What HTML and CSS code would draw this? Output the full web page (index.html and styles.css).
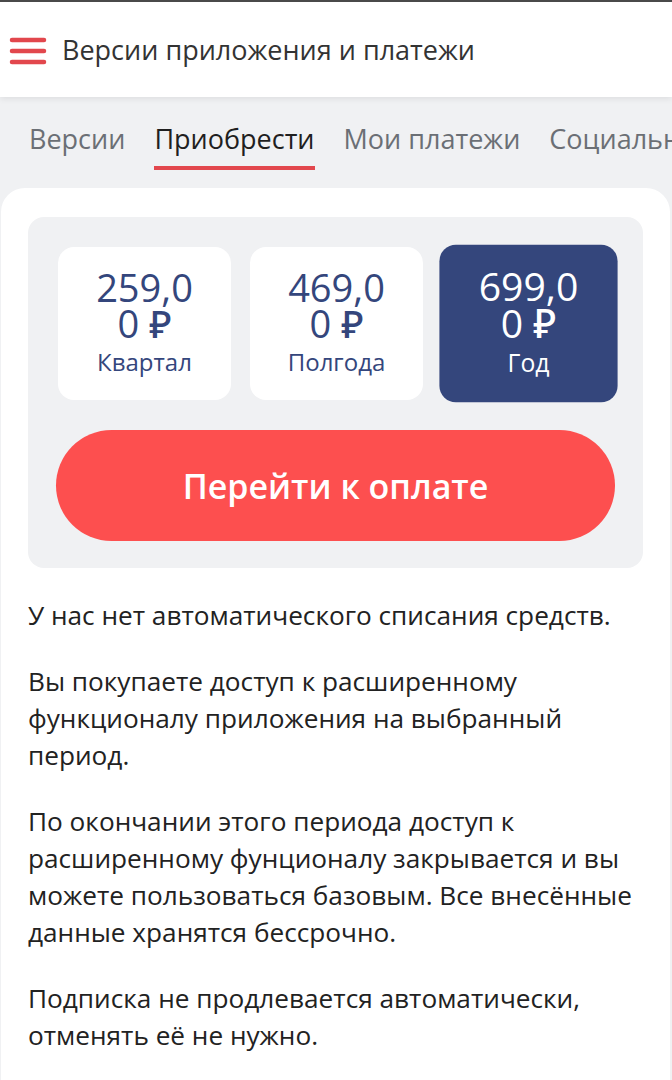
FILE: index.html
```html
<!DOCTYPE html>
<html lang="ru">
<head>
<meta charset="utf-8">
<link rel="stylesheet" href="styles.css">
</head>
<body>
<header class="topbar">
  <button class="menu" aria-label="Меню">
    <svg width="38" height="28" viewBox="0 0 38 28"><g stroke="#e2474d" stroke-width="4.5" stroke-linecap="round"><line x1="3" y1="3" x2="35" y2="3"/><line x1="3" y1="14" x2="35" y2="14"/><line x1="3" y1="25" x2="35" y2="25"/></g></svg>
  </button>
  <h1 class="title">Версии приложения и платежи</h1>
</header>
<nav class="tabs">
  <span class="tab">Версии</span>
  <span class="tab active">Приобрести</span>
  <span class="tab">Мои платежи</span>
  <span class="tab">Социальные</span>
</nav>
<main class="card">
  <section class="panel">
    <div class="plans">
      <div class="plan"><div class="price">259,00 ₽</div><div class="period">Квартал</div></div>
      <div class="plan"><div class="price">469,00 ₽</div><div class="period">Полгода</div></div>
      <div class="plan selected"><div class="price">699,00 ₽</div><div class="period">Год</div></div>
    </div>
    <button class="pay">Перейти к оплате</button>
  </section>
  <p>У нас нет автоматического списания средств.</p>
  <p>Вы покупаете доступ к расширенному функционалу приложения на выбранный период.</p>
  <p>По окончании этого периода доступ к расширенному фунционалу закрывается и вы можете пользоваться базовым. Все внесённые данные хранятся бессрочно.</p>
  <p>Подписка не продлевается автоматически, отменять её не нужно.</p>
</main>
</body>
</html>
```
FILE: styles.css
```css
* { box-sizing: border-box; }
html, body { margin: 0; padding: 0; }
body {
  background: #f0f1f3;
  font-family: "Open Sans", "Noto Sans", sans-serif;
  width: 672px;
  height: 1080px;
  overflow: hidden;
}
.topbar {
  height: 97px;
  background: #fff;
  border-top: 2px solid #4a4a4a;
  display: flex;
  align-items: center;
  padding-left: 9px;
  gap: 15px;
  box-shadow: 0 2px 6px rgba(0,0,0,0.08);
  position: relative;
  z-index: 1;
}
.menu {
  border: 0;
  background: none;
  padding: 0;
  display: flex;
  margin-top: 2px;
}
.title {
  margin: 0;
  font-size: 27px;
  font-weight: 400;
  color: #333;
  white-space: nowrap;
}
.tabs {
  height: 91px;
  display: flex;
  gap: 29px;
  padding: 23px 0 0 29px;
  white-space: nowrap;
  overflow: hidden;
}
.tab {
  font-size: 27px;
  color: #6b6f75;
  height: 50px;
  line-height: 38px;
  border-bottom: 4px solid transparent;
}
.tab.active {
  color: #1f1f1f;
  border-bottom-color: #e2474d;
}
.card {
  background: #fff;
  margin: 0 2px 0 1px;
  border-radius: 24px 24px 0 0;
  padding: 29px 27px 40px 27px;
  min-height: 900px;
}
.panel {
  background: #f0f1f3;
  border-radius: 16px;
  padding: 30px 28px 27px 28px;
}
.plans {
  display: grid;
  grid-template-columns: repeat(3, 1fr);
  gap: 19px;
  padding: 0 0 0 2px;
}
.plan {
  background: #fff;
  border-radius: 16px;
  height: 153px;
  padding: 22px 4px 0;
  text-align: center;
  color: #34467c;
}
.plan.selected {
  background: #34467c;
  color: #fff;
  transform: scale(1.03);
}
.price {
  font-size: 38px;
  font-weight: 500;
  line-height: 36px;
  word-break: break-all;
  padding: 0 26px;
}
.period {
  font-size: 24px;
  line-height: 30px;
  margin-top: 6px;
}
.pay {
  display: block;
  width: 100%;
  margin-top: 30px;
  height: 111px;
  border: 0;
  border-radius: 56px;
  background: #fd4f4f;
  color: #fff;
  font-family: inherit;
  font-size: 34px;
  font-weight: 600;
}
.card p {
  margin: 29px 0 0 0;
  font-size: 26.2px;
  line-height: 37px;
  color: #222;
}
```
